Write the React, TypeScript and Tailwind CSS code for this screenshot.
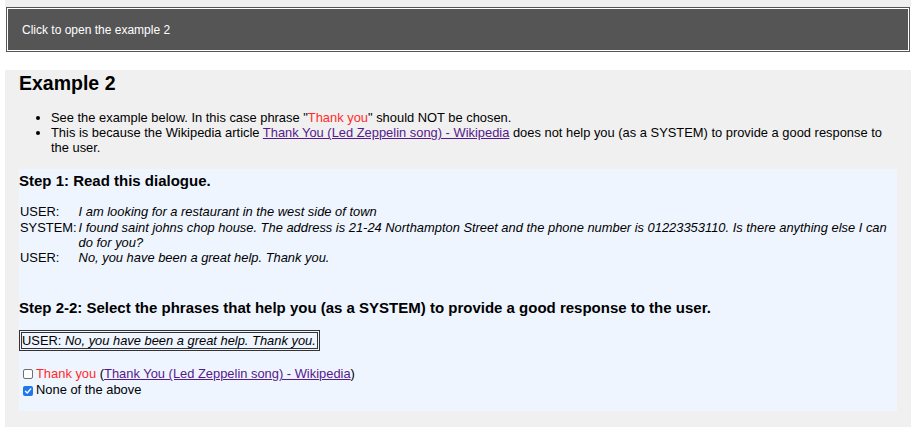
import React from "react";

const Check = ({ checked }: { checked?: boolean }) =>
    checked ? (
        <span className="inline-flex items-center justify-center w-[10px] h-[10px] ml-[4px] mr-[3px] rounded-[2px] bg-[#1f76e8] align-[-1px]">
            <svg width="8" height="8" viewBox="0 0 10 10">
                <path d="M1.8 5.2 L4 7.4 L8.3 2.4" fill="none" stroke="#fff" strokeWidth="1.8" strokeLinecap="round" strokeLinejoin="round" />
            </svg>
        </span>
    ) : (
        <span className="inline-block w-[10px] h-[10px] ml-[4px] mr-[3px] rounded-[2px] border border-[#6f6f6f] bg-white align-[-1px]" />
    );

const Link = ({ children }: { children: React.ReactNode }) => (
    <a href="#" className="text-[#551a8b] underline">
        {children}
    </a>
);

export default function App() {
    return (
        <div className="bg-white text-black min-h-[433px] font-['Liberation_Sans',Arial,sans-serif]">
            <div className="px-[5px]">
                <div className="h-[7px] bg-[#f0f0f0]" />
                <div className="mx-px h-[45px] flex items-center px-[15px] border border-[#555] bg-[#555] shadow-[inset_0_0_0_1px_#fff] text-white text-[12px]">
                    Click to open the example 2
                </div>

                <div className="mt-[18px] bg-[#f0f0f0] px-[14px] pt-[2px] pb-[15.5px]">
                    <h2 className="text-[19.5px] leading-[22.4px] font-bold">Example 2</h2>
                    <ul className="mt-[16px] pl-[32px] list-disc text-[12.9px] leading-[15px]">
                        <li>
                            See the example below. In this case phrase "<span className="text-[#ff2b2b]">Thank you</span>" should NOT be chosen.
                        </li>
                        <li>
                            This is because the Wikipedia article <Link>Thank You (Led Zeppelin song) - Wikipedia</Link> does not help you (as a
                            SYSTEM) to provide a good response to the user.
                        </li>
                    </ul>

                    <div className="mt-[14px] bg-[#eef5ff] pt-[3px] pb-[14px] text-[12.9px]">
                        <h3 className="text-[15px] leading-[17.5px] font-bold">Step 1: Read this dialogue.</h3>
                        <div className="mt-[14.5px] pl-px grid grid-cols-[auto_1fr] gap-x-[2px] leading-[15.33px]">
                            <div>USER:</div>
                            <div className="italic">I am looking for a restaurant in the west side of town</div>
                            <div>SYSTEM:</div>
                            <div className="italic">
                                I found saint johns chop house. The address is 21-24 Northampton Street and the phone number is 01223353110. Is
                                there anything else I can do for you?
                            </div>
                            <div>USER:</div>
                            <div className="italic">No, you have been a great help. Thank you.</div>
                        </div>

                        <h3 className="mt-[33px] text-[15px] leading-[17.5px] font-bold">
                            Step 2-2: Select the phrases that help you (as a SYSTEM) to provide a good response to the user.
                        </h3>
                        <div className="mt-[14px]">
                            <span className="inline-block border-[3px] border-double border-[#333] leading-[15px] pr-px">
                                USER: <i>No, you have been a great help. Thank you.</i>
                            </span>
                        </div>

                        <div className="mt-[15px] leading-[15.5px]">
                            <div>
                                <Check />
                                <span className="text-[#ff2b2b]">Thank you</span> (<Link>Thank You (Led Zeppelin song) - Wikipedia</Link>)
                            </div>
                            <div>
                                <Check checked />
                                None of the above
                            </div>
                        </div>
                    </div>
                </div>
            </div>
        </div>
    );
}
